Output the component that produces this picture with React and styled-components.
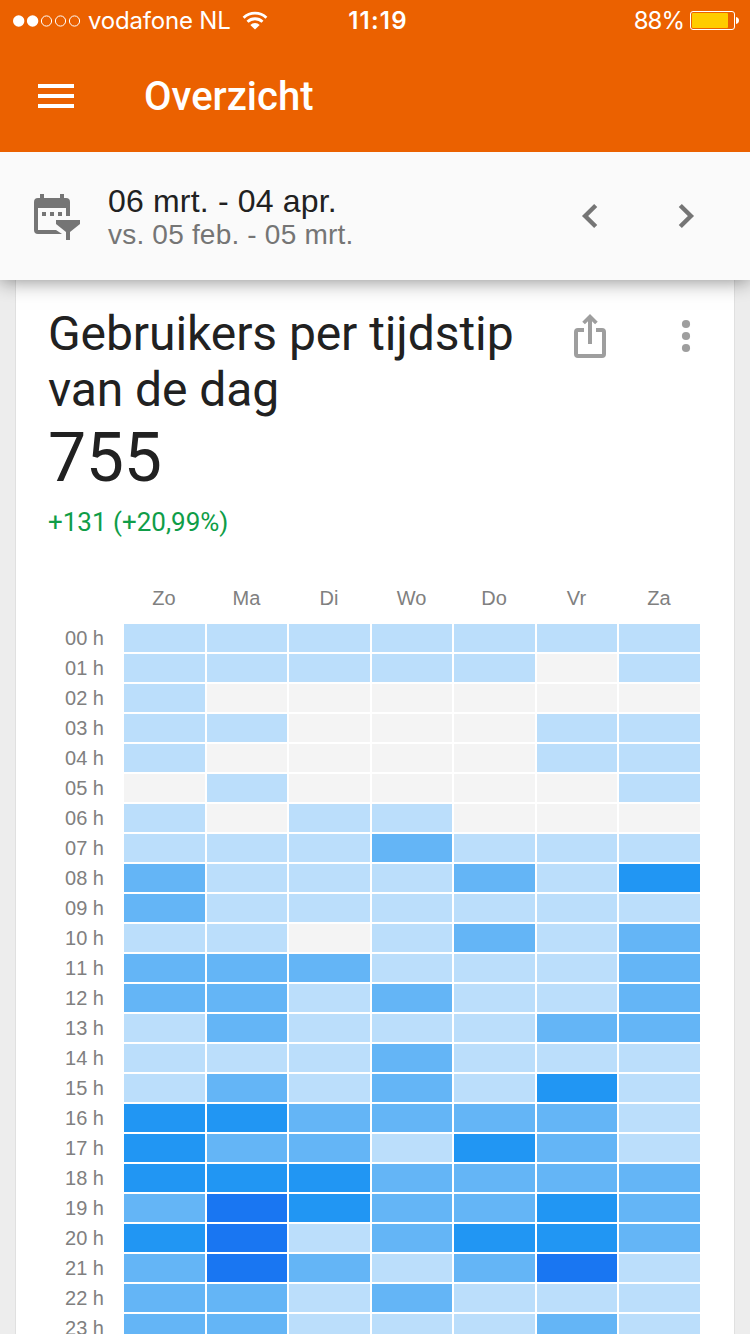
import React from "react";
import styled, { createGlobalStyle } from "styled-components";

const DAYS = ["Zo", "Ma", "Di", "Wo", "Do", "Vr", "Za"];

// one string per hour, one digit (0-4) per day
const HOURS = [
  "1111111",
  "1111101",
  "1000000",
  "1100011",
  "1000011",
  "0100001",
  "1011000",
  "1112111",
  "2111213",
  "2111111",
  "1101212",
  "2221112",
  "2212112",
  "1211122",
  "1112111",
  "1212131",
  "3322221",
  "3221321",
  "3332222",
  "2432232",
  "3412332",
  "2421241",
  "2212111",
  "2211121",
];

const LEVEL_COLORS = ["#f4f4f4", "#bbdefb", "#64b5f6", "#2196f3", "#1976f2"];

const SignalIcon = () => (
  <svg width="70" height="14" viewBox="0 0 70 14">
    <circle cx="6.7" cy="7" r="5.7" fill="#fff" />
    <circle cx="20.6" cy="7" r="5.7" fill="#fff" />
    {[34.5, 48.5, 62.5].map((cx) => (
      <circle key={cx} cx={cx} cy="7" r="5.1" fill="none" stroke="#fff" />
    ))}
  </svg>
);

const WifiIcon = () => (
  <svg width="26" height="20" viewBox="0 0 26 20">
    <g fill="none" stroke="#fff" strokeWidth="2.8">
      <path d="M1.6 6.7a16.4 16.4 0 0 1 22.8 0" />
      <path d="M5.5 10.8a10.7 10.7 0 0 1 15 0" />
    </g>
    <path fill="#fff" d="M13 18.6l-4.7-4.7a6.8 6.8 0 0 1 9.4 0z" />
  </svg>
);

const BatteryIcon = () => (
  <svg width="50" height="19" viewBox="0 0 50 19">
    <rect x=".5" y=".5" width="44" height="18" rx="2.5" fill="none" stroke="#fff" />
    <rect x="2" y="2" width="36" height="15" rx="1" fill="#fc0" />
    <path fill="#fff" d="M46 6c4 .8 4 6.2 0 7z" />
  </svg>
);

const MenuIcon = () => (
  <svg width="36" height="24" viewBox="0 0 36 24" fill="#fff">
    <path d="M0 0h36v4H0zM0 10h36v4H0zM0 20h36v4H0z" />
  </svg>
);

const CalendarFilterIcon = () => (
  <svg width="46" height="46" viewBox="0 0 46 46" fill="#757575">
    <path d="M6 0h4v4h16V0h4v4h2a4 4 0 0 1 4 4v14h-4v-8H4v22h18l6 4H4a4 4 0 0 1-4-4V8a4 4 0 0 1 4-4h2z" />
    <path d="M8 18h4v4H8zM16 18h4v4h-4zM24 18h4v4h-4z" />
    <path d="M22 26h24v4l-10 8v8h-4v-8l-10-8z" />
  </svg>
);

const ChevronIcon = ({ direction }) => (
  <svg width="48" height="48" viewBox="0 0 48 48" fill="none" stroke="#757575">
    <path
      strokeWidth="4.4"
      d={
        direction === "left"
          ? "M29.7 13.5L19.1 24l10.6 10.5"
          : "M18.3 13.5L28.9 24 18.3 34.5"
      }
    />
  </svg>
);

const ShareIcon = () => (
  <svg width="32" height="44" viewBox="0 0 32 44" fill="none" stroke="#9e9e9e" strokeWidth="4">
    <path d="M10 16H4a2 2 0 0 0-2 2v22a2 2 0 0 0 2 2h24a2 2 0 0 0 2-2V18a2 2 0 0 0-2-2h-6" />
    <path d="M16 30V4" />
    <path d="M9.6 9L16 2.7 22.4 9" strokeWidth="3.8" />
  </svg>
);

const MoreIcon = () => (
  <svg width="10" height="34" viewBox="0 0 10 34" fill="#9e9e9e">
    <circle cx="5" cy="5" r="4.1" />
    <circle cx="5" cy="17" r="4.1" />
    <circle cx="5" cy="29" r="4.1" />
  </svg>
);

const App = () => {
  return (
    <Screen>
      <GlobalStyle />
      <Header>
        <StatusBar>
          <StatusGroup>
            <SignalIcon />
            <Carrier>vodafone NL</Carrier>
            <WifiIcon />
          </StatusGroup>
          <Clock>11:19</Clock>
          <StatusGroup $alignEnd>
            <Percentage>88%</Percentage>
            <BatteryIcon />
          </StatusGroup>
        </StatusBar>
        <Toolbar>
          <MenuIcon />
          <PageTitle>Overzicht</PageTitle>
        </Toolbar>
      </Header>
      <DateBar>
        <CalendarFilterIcon />
        <DateRange>
          <CurrentRange>06 mrt. - 04 apr.</CurrentRange>
          <PreviousRange>vs. 05 feb. - 05 mrt.</PreviousRange>
        </DateRange>
        <DateNav>
          <ChevronIcon direction="left" />
          <ChevronIcon direction="right" />
        </DateNav>
      </DateBar>
      <Card>
        <CardHeader>
          <CardTitle>
            Gebruikers per tijdstip
            <br />
            van de dag
          </CardTitle>
          <CardActions>
            <ShareIcon />
            <MoreIcon />
          </CardActions>
        </CardHeader>
        <Total>755</Total>
        <Difference>+131 (+20,99%)</Difference>
        <Heatmap>
          <DayRow>
            <span />
            {DAYS.map((day) => (
              <DayLabel key={day}>{day}</DayLabel>
            ))}
          </DayRow>
          {HOURS.map((levels, hour) => (
            <HourRow key={hour}>
              <HourLabel>{String(hour).padStart(2, "0")} h</HourLabel>
              {levels.split("").map((level, i) => (
                <Cell key={DAYS[i]} $level={level} />
              ))}
            </HourRow>
          ))}
        </Heatmap>
      </Card>
    </Screen>
  );
};

export default App;

const GlobalStyle = createGlobalStyle`
  * {
    box-sizing: border-box;
  }

  body {
    margin: 0;
    background: #ededed;
  }

  svg {
    display: block;
    flex-shrink: 0;
  }
`;

const Screen = styled.div`
  display: flex;
  flex-direction: column;
  width: 750px;
  height: 1334px;
  overflow: hidden;
  background: #ededed;
  color: #212121;
  font-family: Roboto, sans-serif;
`;

const Header = styled.header`
  flex: none;
  height: 152px;
  background: #eb6100;
  color: #fff;
`;

const StatusBar = styled.div`
  display: grid;
  grid-template-columns: 1fr auto 1fr;
  align-items: center;
  height: 41px;
  padding: 0 10px 0 12px;
  font-family: Inter, sans-serif;
  font-size: 24px;
`;

const StatusGroup = styled.div`
  display: flex;
  align-items: center;
  justify-content: ${({ $alignEnd }) => ($alignEnd ? "flex-end" : "flex-start")};
`;

const Carrier = styled.span`
  width: 160px;
  padding-left: 6px;
  letter-spacing: -0.2px;
  white-space: nowrap;
`;

const Clock = styled.span`
  padding-left: 4px;
  font-weight: 600;
  letter-spacing: 1.2px;
`;

const Percentage = styled.span`
  margin-right: 6px;
  letter-spacing: -1px;
`;

const Toolbar = styled.div`
  display: flex;
  align-items: center;
  height: 110px;
  padding-left: 38px;
`;

const PageTitle = styled.h1`
  margin: 2px 0 0 70px;
  font-size: 40px;
  font-weight: 500;
  line-height: 48px;
`;

const DateBar = styled.div`
  position: relative;
  z-index: 1;
  display: flex;
  flex: none;
  align-items: center;
  height: 128px;
  padding: 2px 40px 0 34px;
  background: #fafafa;
  box-shadow: 0 0 20px rgba(0, 0, 0, 0.5);
  clip-path: inset(0 0 -40px 0);
  font-family: "Liberation Sans", sans-serif;
`;

const DateRange = styled.div`
  margin: 1px 0 0 28px;
  white-space: nowrap;
`;

const CurrentRange = styled.div`
  font-size: 32px;
  letter-spacing: 0.18px;
  line-height: 34px;
`;

const PreviousRange = styled.div`
  color: #757575;
  font-size: 28px;
  letter-spacing: 0.2px;
  line-height: 33px;
`;

const DateNav = styled.div`
  display: flex;
  gap: 48px;
  margin: -2px 0 0 auto;
`;

const Card = styled.section`
  flex: none;
  width: 720px;
  height: 1054px;
  margin: 0 15px;
  padding: 0 33px 0 32px;
  overflow: hidden;
  border: solid #e0e0e0;
  border-width: 0 1px;
  background: #fff;
`;

const CardHeader = styled.div`
  display: flex;
  justify-content: space-between;
  padding-top: 26px;
`;

const CardTitle = styled.h2`
  margin: 0;
  font-size: 48px;
  font-weight: 400;
  letter-spacing: -0.08px;
  line-height: 56px;
  white-space: nowrap;
`;

const CardActions = styled.div`
  display: flex;
  align-items: center;
  gap: 75px;
  height: 44px;
  margin: 8px 10px 0 0;
`;

const Total = styled.div`
  height: 76px;
  font-size: 68px;
  letter-spacing: -0.4px;
  line-height: 80px;
`;

const Difference = styled.div`
  color: #0f9d48;
  font-size: 26px;
  line-height: 56px;
`;

const Heatmap = styled.div`
  margin-top: 33px;
  color: #808080;
  font-family: "Liberation Sans", sans-serif;
  font-size: 20px;
`;

const HourRow = styled.div`
  display: grid;
  grid-template-columns: 74px 81px 80px 81px 80px 81px 80px 81px;
  column-gap: 2px;
  height: 28px;
  margin-bottom: 2px;
`;

const DayRow = styled(HourRow)`
  height: 41px;
  margin: 0;
`;

const DayLabel = styled.span`
  padding-right: 1px;
  line-height: 30px;
  text-align: center;
`;

const HourLabel = styled.span`
  padding-right: 18px;
  font-kerning: none;
  line-height: 28px;
  text-align: right;
`;

const Cell = styled.div`
  background: ${({ $level }) => LEVEL_COLORS[$level]};
`;
